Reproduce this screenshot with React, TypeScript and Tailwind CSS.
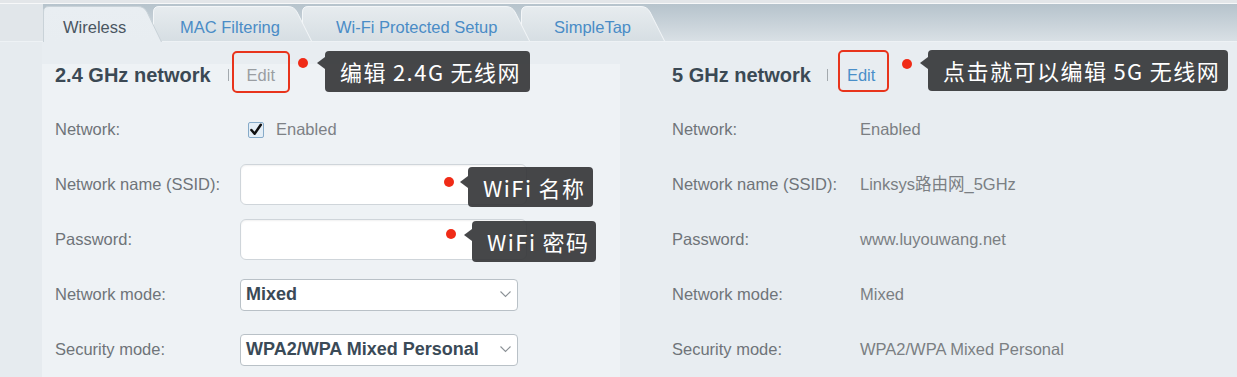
import React from 'react';

type TabProps = { label: string; width: number; textLeft: number; active?: boolean; z: string; overlap?: string };

function Tab({ label, width, textLeft, active, z, overlap }: TabProps) {
  const w = width;
  const h = active ? 36 : 35;
  const d = `M0.5 ${h} L0.5 6 Q0.5 0.5 6 0.5 L${w - 24} 0.5 Q${w - 18} 0.5 ${w - 15} 6 L${w - 0.5} ${h}`;
  const gid = `tab-${label.replace(/\W/g, '')}`;
  return (
    <div
      className={`relative shrink-0 ${z} ${overlap ?? ''} ${active ? 'h-[36px] -mb-px' : 'h-[35px]'}`}
      style={{ width: w }}
    >
      <svg className="absolute inset-0" width={w} height={h} viewBox={`0 0 ${w} ${h}`}>
        <defs>
          <linearGradient id={gid} x1="0" y1="0" x2="0" y2="1">
            <stop offset="0" stopColor={active ? '#e9eef2' : '#e7ecef'} />
            <stop offset="1" stopColor={active ? '#e8edf1' : '#d6dee3'} />
          </linearGradient>
        </defs>
        <path d={d + ' Z'} fill={`url(#${gid})`} />
        <path d={d} fill="none" stroke={active ? '#c9d2d8' : '#f3f6f8'} strokeWidth="1" />
      </svg>
      <span
        className={`absolute top-[6px] text-[16.5px] leading-[30px] ${active ? 'text-[#4a5661]' : 'text-[#4a8cc6]'}`}
        style={{ left: textLeft }}
      >
        {label}
      </span>
    </div>
  );
}

function Tip({ text, className, arrowTop }: { text: string; className: string; arrowTop: string }) {
  return (
    <div
      className={`absolute rounded-[4px] bg-[#323335]/90 text-white text-[22px] tracking-[1.5px] flex items-center pl-[15px] font-['Noto_Sans_CJK_SC',sans-serif] whitespace-nowrap ${className}`}
    >
      <div
        className={`absolute -left-[8px] ${arrowTop} w-0 h-0 border-y-[6px] border-y-transparent border-r-[8px] border-r-[#323335]/90`}
      />
      {text}
    </div>
  );
}

function Dot({ className }: { className: string }) {
  return <div className={`absolute w-[10px] h-[10px] rounded-full bg-[#f02b17] ${className}`} />;
}

function Chevron() {
  return (
    <svg width="11" height="7" viewBox="0 0 11 7" className="shrink-0">
      <polyline points="0.5,0.5 5.5,5.5 10.5,0.5" fill="none" stroke="#8b9196" strokeWidth="1.1" />
    </svg>
  );
}

function Select({ value }: { value: string }) {
  return (
    <div className="w-[278px] h-[32px] bg-white border border-[#b9c1c7] rounded-[4px] flex items-center justify-between pl-[5px] pr-[6px]">
      <span className="text-[18px] font-bold text-[#3a4a57]">{value}</span>
      <Chevron />
    </div>
  );
}

function Row({ label, labelWidth, children }: { label: string; labelWidth: string; children: React.ReactNode }) {
  return (
    <div className="h-[55px] flex items-center">
      <div className={`${labelWidth} shrink-0 text-[16.5px] text-[#6f7479]`}>{label}</div>
      {children}
    </div>
  );
}

export default function App() {
  const rightRows: [string, string][] = [
    ['Network:', 'Enabled'],
    ['Network name (SSID):', 'Linksys路由网_5GHz'],
    ['Password:', 'www.luyouwang.net'],
    ['Network mode:', 'Mixed'],
    ['Security mode:', 'WPA2/WPA Mixed Personal'],
  ];

  return (
    <div className="w-[1237px] h-[377px] overflow-hidden bg-[#e8edf1] font-['Liberation_Sans','Noto_Sans_CJK_SC',Arial,sans-serif]">
      {/* top edge */}
      <div className="h-[4px] bg-[#e3e6e9] border-b border-[#f7f8f9]" />

      {/* tab strip */}
      <div className="flex h-[38px]">
        <div className="w-[43px] bg-[#e1e6ea] border-b border-[#eef2f5]" />
        <div className="flex-1 flex items-end bg-gradient-to-b from-[#b6c3cc] to-[#d9e0e5] border-b border-[#eef2f5]">
          <Tab label="Wireless" width={119} textLeft={20} active z="z-40" />
          <Tab label="MAC Filtering" width={159} textLeft={27} z="z-30" overlap="-ml-[9px]" />
          <Tab label="Wi-Fi Protected Setup" width={228} textLeft={34} z="z-20" overlap="-ml-[10px]" />
          <Tab label="SimpleTap" width={144} textLeft={33} z="z-10" overlap="-ml-[9px]" />
        </div>
      </div>

      {/* content */}
      <div className="flex">
        <div className="w-[42px] shrink-0 bg-[#e6ebef] h-[335px]" />

        {/* 2.4 GHz */}
        <section className="w-[578px] shrink-0 mt-[22px] h-[313px] bg-[#eef2f5] pl-[13px]">
          <div className="relative h-[22px] flex items-center">
            <h2 className="text-[20px] leading-[22px] font-bold text-[#3b4954]">2.4 GHz network</h2>
            <span className="ml-[17px] w-px h-[12px] bg-[#a3a9ae]" />
            <span className="ml-[18px] text-[16.5px] text-[#9a9ea2]">Edit</span>
            <div className="absolute left-[177px] -top-[13px] w-[58px] h-[42px] border-[2.5px] border-[#e8341c] rounded-[5px]" />
            <Dot className="left-[243px] -top-[6px]" />
            <Tip text={'编辑\u20092.4G\u2009无线网'} className="left-[270px] -top-[13px] w-[205px] h-[41px]" arrowTop="top-[6px]" />
          </div>

          <div className="mt-[16px]">
            <Row label="Network:" labelWidth="w-[185px]">
              <svg width="16" height="16" viewBox="0 0 16 16" className="ml-[8px] shrink-0">
                <rect x="0.5" y="0.5" width="15" height="15" rx="1.5" fill="#e4eef6" stroke="#86abc9" />
                <path d="M3.4 8 L6.6 11.8 L12.8 2.8" fill="none" stroke="#111" strokeWidth="2.5" strokeLinecap="round" strokeLinejoin="round" />
              </svg>
              <span className="ml-[12px] text-[16.5px] text-[#7d8186]">Enabled</span>
            </Row>
            <Row label="Network name (SSID):" labelWidth="w-[185px]">
              <div className="relative w-[287px] h-[41px] bg-white border border-[#cfd5da] rounded-[6px] shadow-[inset_0_1px_2px_rgba(0,0,0,0.06)]">
                <Dot className="left-[203px] top-[12px]" />
                <Tip text={'WiFi\u2009名称'} className="left-[227px] top-[2px] w-[125px] h-[40px]" arrowTop="top-[9px]" />
              </div>
            </Row>
            <Row label="Password:" labelWidth="w-[185px]">
              <div className="relative w-[287px] h-[41px] bg-white border border-[#cfd5da] rounded-[6px] shadow-[inset_0_1px_2px_rgba(0,0,0,0.06)]">
                <Dot className="left-[205px] top-[9px]" />
                <Tip text={'WiFi\u2009密码'} className="left-[231px] top-[1px] w-[124px] h-[41px]" arrowTop="top-[8px]" />
              </div>
            </Row>
            <Row label="Network mode:" labelWidth="w-[185px]">
              <Select value="Mixed" />
            </Row>
            <Row label="Security mode:" labelWidth="w-[185px]">
              <Select value="WPA2/WPA Mixed Personal" />
            </Row>
          </div>
        </section>

        {/* 5 GHz */}
        <section className="flex-1 mt-[22px] pl-[52px]">
          <div className="relative h-[22px] flex items-center">
            <h2 className="text-[20px] leading-[22px] font-bold text-[#3b4954]">5 GHz network</h2>
            <span className="ml-[16px] w-px h-[12px] bg-[#a3a9ae]" />
            <span className="ml-[19px] text-[16.5px] text-[#4a8fc9]">Edit</span>
            <div className="absolute left-[166px] -top-[14px] w-[51px] h-[42px] border-[2.5px] border-[#e8341c] rounded-[5px]" />
            <Dot className="left-[230px] -top-[5px]" />
            <Tip text={'点击就可以编辑\u20095G\u2009无线网'} className="left-[256px] -top-[14px] w-[300px] h-[41px]" arrowTop="top-[7px]" />
          </div>

          <div className="mt-[16px]">
            {rightRows.map(([label, value]) => (
              <Row key={label} label={label} labelWidth="w-[188px]">
                <span className="text-[16.5px] text-[#7b7f83]">{value}</span>
              </Row>
            ))}
          </div>
        </section>
      </div>
    </div>
  );
}
